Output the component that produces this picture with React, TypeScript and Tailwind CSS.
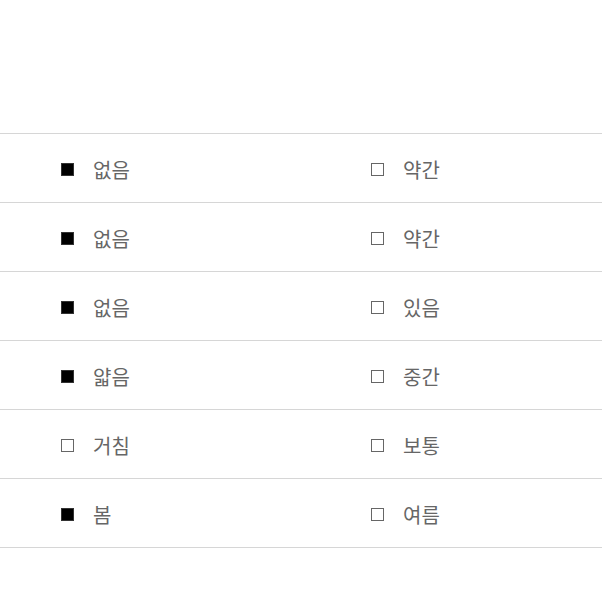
import React from "react";

const rows: [boolean, string, boolean, string][] = [
  [true, "없음", false, "약간"],
  [true, "없음", false, "약간"],
  [true, "없음", false, "있음"],
  [true, "얇음", false, "중간"],
  [false, "거침", false, "보통"],
  [true, "봄", false, "여름"],
];

function Item({ filled, label }: { filled: boolean; label: string }) {
  return (
    <div className="flex items-center">
      {filled ? (
        <span className="inline-block w-[13px] h-[13px] bg-black border border-[#333]" />
      ) : (
        <span className="inline-block w-[13px] h-[13px] bg-white border-[1.5px] border-[#666]" />
      )}
      <span className="ml-[19px] text-[20px] leading-none font-normal text-[#666]">{label}</span>
    </div>
  );
}

export default function App() {
  return (
    <div
      className="w-[602px] h-[602px] bg-white"
      style={{ fontFamily: '"Noto Sans CJK KR", "Noto Sans", sans-serif' }}
    >
      <div className="pt-[133px]">
        <div className="border-t border-[#d6d6d6]">
          {rows.map((r, i) => (
            <div key={i} className="grid grid-cols-2 h-[69px] border-b border-[#d6d6d6]">
              <div className="flex items-center pl-[61px] pt-[3px]">
                <Item filled={r[0]} label={r[1]} />
              </div>
              <div className="flex items-center pl-[70px] pt-[3px]">
                <Item filled={r[2]} label={r[3]} />
              </div>
            </div>
          ))}
        </div>
      </div>
    </div>
  );
}
